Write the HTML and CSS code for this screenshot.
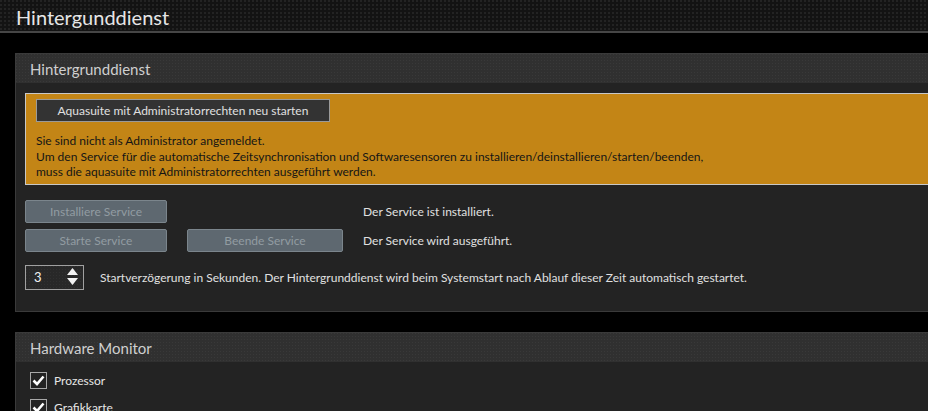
FILE: index.html
```html
<!DOCTYPE html>
<html lang="de">
<head>
  <meta charset="UTF-8">
  <title>Hintergunddienst</title>
  <link rel="stylesheet" href="styles.css">
</head>
<body>
  <header class="page-head">Hintergunddienst</header>

  <div class="content">
    <section class="panel">
      <div class="panel-head">Hintergrunddienst</div>
      <div class="panel-body">
        <div class="warning">
          <button class="admin-btn">Aquasuite mit Administratorrechten neu starten</button>
          <p>Sie sind nicht als Administrator angemeldet.<br>
          Um den Service für die automatische Zeitsynchronisation und Softwaresensoren zu installieren/deinstallieren/starten/beenden,<br>
          muss die aquasuite mit Administratorrechten ausgeführt werden.</p>
        </div>

        <div class="service-row first">
          <div class="btn-group">
            <button class="svc-btn" disabled>Installiere Service</button>
          </div>
          <span class="status">Der Service ist installiert.</span>
        </div>
        <div class="service-row">
          <div class="btn-group">
            <button class="svc-btn" disabled>Starte Service</button>
            <button class="svc-btn wide" disabled>Beende Service</button>
          </div>
          <span class="status">Der Service wird ausgeführt.</span>
        </div>

        <div class="delay-row">
          <div class="spinner">
            <span>3</span>
            <svg width="11" height="20" viewBox="0 0 11 20">
              <path d="M5.5 1 L11 8 L0 8 Z" fill="#f2f2f2"/>
              <path d="M0 11 L11 11 L5.5 18 Z" fill="#f2f2f2"/>
            </svg>
          </div>
          <span class="delay-text">Startverzögerung in Sekunden. Der Hintergrunddienst wird beim Systemstart nach Ablauf dieser Zeit automatisch gestartet.</span>
        </div>
      </div>
    </section>

    <section class="panel">
      <div class="panel-head">Hardware Monitor</div>
      <div class="panel-body checks">
        <label class="check"><span class="box"><svg width="13" height="11" viewBox="0 0 13 11"><path d="M1.5 5.5 L5 9 L11.5 1.5" stroke="#fff" stroke-width="2.6" fill="none"/></svg></span>Prozessor</label>
        <label class="check"><span class="box"><svg width="13" height="11" viewBox="0 0 13 11"><path d="M1.5 5.5 L5 9 L11.5 1.5" stroke="#fff" stroke-width="2.6" fill="none"/></svg></span>Grafikkarte</label>
      </div>
    </section>
  </div>
</body>
</html>
```

FILE: styles.css
```css
body {
  margin: 0;
  background: #000;
  font-family: "Segoe UI", Lato, "Noto Sans", sans-serif;
  font-size: 12px;
  color: #ddd;
  overflow: hidden;
  height: 411px;
}
button {
  font-family: inherit;
  font-size: 12px;
}
.page-head {
  height: 33px;
  box-sizing: border-box;
  padding: 5px 0 0 16px;
  font-size: 20px;
  line-height: 24px;
  color: #e6e6e6;
  background-color: #232323;
  background-image: linear-gradient(90deg, transparent 2px, #131313 2px), linear-gradient(transparent 2px, #131313 2px);
  background-size: 4px 4px;
  border-bottom: 2px solid #464646;
}
.content {
  padding: 20px 0 0 15px;
}
.panel {
  margin-right: -40px;
  margin-bottom: 20px;
  border: 1px solid #3a3a3a;
  background: #232323;
}
.panel-head {
  height: 29px;
  box-sizing: border-box;
  padding: 5px 0 0 14px;
  font-size: 15px;
  line-height: 20px;
  color: #cfcfcf;
  background-color: #393939;
  background-image: linear-gradient(90deg, transparent 1px, #303030 1px), linear-gradient(transparent 1px, #303030 1px);
  background-size: 3px 3px;
}
.panel-body {
  padding: 10px 0 21px 9px;
}
.warning {
  background: #c38516;
  border: 1px solid #c8c8c8;
  border-right: none;
  padding: 5px 0 4px 10px;
  color: #151515;
}
.admin-btn {
  width: 294px;
  height: 23px;
  background: #333;
  border: 1px solid #9a9a9a;
  color: #e0e0e0;
  padding: 0;
}
.warning p {
  margin: 11px 0 0;
  line-height: 15.5px;
}
.service-row {
  display: flex;
  align-items: center;
  margin-top: 6px;
}
.service-row.first {
  margin-top: 15px;
}
.btn-group {
  display: flex;
  gap: 20px;
  width: 338px;
}
.svc-btn {
  width: 142px;
  height: 23px;
  background: #5e6870;
  border: 1px solid #7b858c;
  border-radius: 2px;
  color: #929ca2;
  padding: 0;
}
.svc-btn.wide {
  width: 156px;
}
.status {
  color: #e0e0e0;
}
.delay-row {
  display: flex;
  align-items: center;
  margin-top: 13px;
}
.spinner {
  width: 59px;
  height: 25px;
  box-sizing: border-box;
  border: 1px solid #a0a0a0;
  display: flex;
  align-items: center;
  justify-content: space-between;
  padding: 0 5px 0 8px;
  color: #f0f0f0;
  font-size: 13px;
  background-color: #303030;
  background-image: linear-gradient(90deg, transparent 1px, #282828 1px), linear-gradient(transparent 1px, #282828 1px);
  background-size: 3px 3px;
}
.delay-text {
  margin-left: 16px;
  color: #e0e0e0;
}
.checks {
  padding: 10px 0 0 14px;
}
.check {
  display: flex;
  align-items: center;
  gap: 7px;
  color: #e6e6e6;
  margin-bottom: 10px;
}
.box {
  width: 17px;
  height: 17px;
  box-sizing: border-box;
  border: 1px solid #a8a8a8;
  display: flex;
  align-items: center;
  justify-content: center;
}
```
